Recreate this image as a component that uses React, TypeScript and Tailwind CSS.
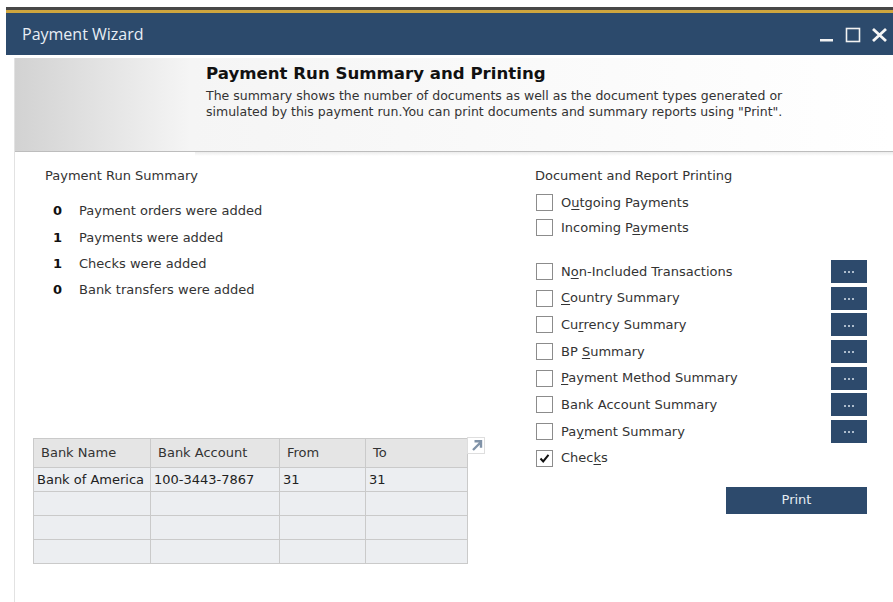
const counts = [
  { n: "0", label: "Payment orders were added" },
  { n: "1", label: "Payments were added" },
  { n: "1", label: "Checks were added" },
  { n: "0", label: "Bank transfers were added" },
];

// label split around the mnemonic letter: [before, key, after]
type Option = { parts: [string, string, string]; checked?: boolean; more?: boolean };

const docOptions: Option[] = [
  { parts: ["O", "u", "tgoing Payments"] },
  { parts: ["Incoming P", "a", "yments"] },
];

const reportOptions: Option[] = [
  { parts: ["N", "o", "n-Included Transactions"], more: true },
  { parts: ["", "C", "ountry Summary"], more: true },
  { parts: ["Cu", "r", "rency Summary"], more: true },
  { parts: ["BP ", "S", "ummary"], more: true },
  { parts: ["", "P", "ayment Method Summary"], more: true },
  { parts: ["Bank Account Summary", "", ""], more: true },
  { parts: ["Pa", "y", "ment Summary"], more: true },
  { parts: ["Chec", "k", "s"], checked: true },
];

const banks = [
  ["Bank of America", "100-3443-7867", "31", "31"],
  ["", "", "", ""],
  ["", "", "", ""],
  ["", "", "", ""],
];

function CheckBox({ checked }: { checked?: boolean }) {
  return (
    <span className="w-[17px] h-[17px] border border-[#8c8c8c] bg-white flex items-center justify-center shrink-0">
      {checked && (
        <svg width="11" height="11" viewBox="0 0 11 11">
          <path d="M1.5 5.5 L4.2 8.4 L9.5 1.8" fill="none" stroke="#111" strokeWidth="2" />
        </svg>
      )}
    </span>
  );
}

function OptionRow({ opt }: { opt: Option }) {
  return (
    <div className="h-[26.7px] flex items-center">
      <CheckBox checked={opt.checked} />
      <span className="ml-[8px] text-[13px] text-[#333]">
        {opt.parts[0]}
        <span className="underline underline-offset-2">{opt.parts[1]}</span>
        {opt.parts[2]}
      </span>
      {opt.more && (
        <button className="ml-auto w-[36px] h-[23px] bg-[#2d4a6c] flex items-center justify-center gap-[2px] pt-[2px]">
          <span className="w-[2px] h-[2px] bg-[#aebdcd]" />
          <span className="w-[2px] h-[2px] bg-[#aebdcd]" />
          <span className="w-[2px] h-[2px] bg-[#aebdcd]" />
        </button>
      )}
    </div>
  );
}

export default function App() {
  return (
    <div className="w-[893px] h-[602px] bg-white overflow-hidden flex flex-col" style={{ fontFamily: '"DejaVu Sans", Verdana, sans-serif' }}>
      <div className="h-[7px] shrink-0" />
      <div className="ml-[6px] h-[3px] bg-[#474747] shrink-0" />
      <div className="ml-[6px] h-[3px] bg-[#cfa63e] shrink-0" />

      {/* title bar */}
      <div className="ml-[6px] h-[42px] bg-[#2c4a6c] flex items-center justify-between pl-[16px] pr-[5px] shrink-0">
        <span className="text-[16px] text-[#e8eef5]" style={{ fontFamily: '"Open Sans", sans-serif' }}>
          Payment Wizard
        </span>
        <div className="flex items-center gap-[10px] mt-[2px]">
          <svg width="16" height="16" viewBox="0 0 16 16">
            <rect x="1" y="12" width="13" height="2.5" fill="#f2f2f2" />
          </svg>
          <svg width="16" height="16" viewBox="0 0 16 16">
            <rect x="1.5" y="1.5" width="13" height="13" fill="none" stroke="#f2f2f2" strokeWidth="1.6" />
          </svg>
          <svg width="17" height="16" viewBox="0 0 17 16">
            <path d="M2 2 L15 14 M15 2 L2 14" stroke="#f7f7f7" strokeWidth="2.8" />
          </svg>
        </div>
      </div>

      {/* wizard body */}
      <div className="ml-[6px] flex-1 flex flex-col pl-[8px] pt-[3px]">
        <div className="flex-1 flex flex-col border-l border-[#e2e2e2]">
          {/* step banner */}
          <div className="h-[94px] shrink-0 bg-gradient-to-r from-[#d2d2d2] via-[#f5f5f5] via-20% to-white border-b border-[#bdbdbd] pl-[191px] pt-[5px]">
            <div className="text-[16.6px] font-bold text-[#111] leading-[22px]">Payment Run Summary and Printing</div>
            <div className="text-[12.5px] text-[#333] leading-[16px] mt-[3px]">
              The summary shows the number of documents as well as the document types generated or
              <br />
              simulated by this payment run.You can print documents and summary reports using "Print".
            </div>
          </div>
          <div className="h-[4px] ml-[180px] bg-gradient-to-b from-[#ececec] to-white shrink-0" />

          <div className="flex-1 flex">
            {/* left: summary + bank table */}
            <div className="w-[520px] pl-[18px] pt-[12px] flex flex-col">
              <div className="pl-[12px] text-[13px] text-[#333] h-[16px] leading-[16px]">Payment Run Summary</div>
              <div className="pl-[20px] mt-[14px] flex flex-col">
                {counts.map((c, i) => (
                  <div key={i} className="h-[26.3px] flex items-center text-[13px]">
                    <span className="w-[26px] font-bold text-[#111]">{c.n}</span>
                    <span className="text-[#333]">{c.label}</span>
                  </div>
                ))}
              </div>

              <div className="mt-[135px] flex items-start">
                <table className="border-collapse text-[13px] text-[#222] w-[434px] table-fixed">
                  <colgroup>
                    <col className="w-[117px]" />
                    <col className="w-[129px]" />
                    <col className="w-[86px]" />
                    <col className="w-[102px]" />
                  </colgroup>
                  <thead>
                    <tr className="h-[29px] bg-[#e5e5e5]">
                      {["Bank Name", "Bank Account", "From", "To"].map((h) => (
                        <th key={h} className="border border-[#cacaca] font-normal text-left pl-[7px] text-[#333]">
                          {h}
                        </th>
                      ))}
                    </tr>
                  </thead>
                  <tbody>
                    {banks.map((r, i) => (
                      <tr key={i} className="h-[24px] bg-[#eceef1]">
                        {r.map((v, j) => (
                          <td key={j} className="border border-[#cacaca] pl-[3px] whitespace-nowrap overflow-hidden">
                            {v}
                          </td>
                        ))}
                      </tr>
                    ))}
                  </tbody>
                </table>
                <span className="w-[18px] h-[17px] border border-[#dedede] flex items-center justify-center -ml-[1px] -mt-[1px]">
                  <svg width="13" height="13" viewBox="0 0 13 13">
                    <path d="M3 11 L10.5 3.5 M4.5 2.2 H11 V8.7" fill="none" stroke="#8193a8" strokeWidth="2.4" />
                  </svg>
                </span>
              </div>
            </div>

            {/* right: printing options */}
            <div className="w-[332px] pt-[12px] flex flex-col">
              <div className="text-[13px] text-[#333] h-[16px] leading-[16px]">Document and Report Printing</div>
              <div className="mt-[6px] pl-[1px]">
                {docOptions.map((o, i) => (
                  <div key={i} className="h-[25px] flex items-center">
                    <CheckBox />
                    <span className="ml-[8px] text-[13px] text-[#333]">
                      {o.parts[0]}
                      <span className="underline underline-offset-2">{o.parts[1]}</span>
                      {o.parts[2]}
                    </span>
                  </div>
                ))}
              </div>
              <div className="mt-[18px] pl-[1px]">
                {reportOptions.map((o, i) => (
                  <OptionRow key={i} opt={o} />
                ))}
              </div>
              <div className="flex justify-end mt-[15px]">
                <button className="w-[141px] h-[27px] bg-[#2d4a6c] text-[#e6ecf2] text-[13px]">Print</button>
              </div>
            </div>
          </div>
        </div>
      </div>
    </div>
  );
}
